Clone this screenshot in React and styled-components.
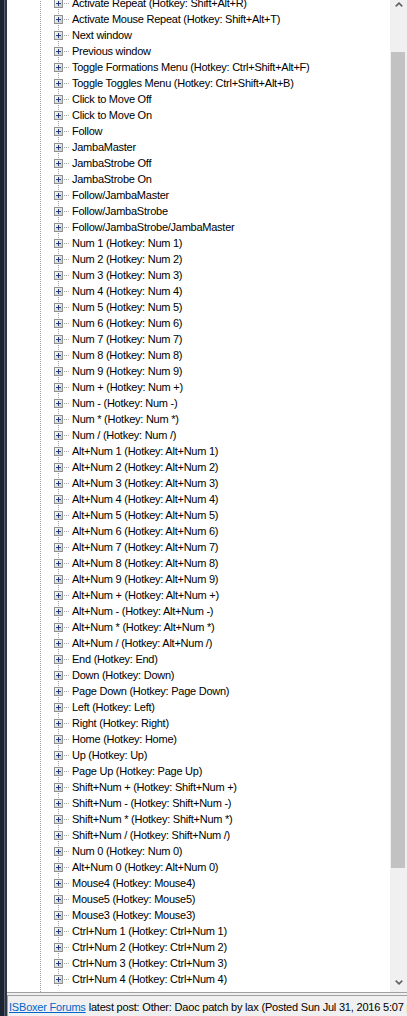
import React from 'react';
import styled, { createGlobalStyle } from 'styled-components';

const GlobalStyle = createGlobalStyle`
  html, body {
    margin: 0;
    padding: 0;
    background: #ffffff;
  }
  body {
    font-family: "Liberation Sans", Arial, sans-serif;
  }
`;

const nodes = [
  'Activate Repeat (Hotkey: Shift+Alt+R)',
  'Activate Mouse Repeat (Hotkey: Shift+Alt+T)',
  'Next window',
  'Previous window',
  'Toggle Formations Menu (Hotkey: Ctrl+Shift+Alt+F)',
  'Toggle Toggles Menu (Hotkey: Ctrl+Shift+Alt+B)',
  'Click to Move Off',
  'Click to Move On',
  'Follow',
  'JambaMaster',
  'JambaStrobe Off',
  'JambaStrobe On',
  'Follow/JambaMaster',
  'Follow/JambaStrobe',
  'Follow/JambaStrobe/JambaMaster',
  'Num 1 (Hotkey: Num 1)',
  'Num 2 (Hotkey: Num 2)',
  'Num 3 (Hotkey: Num 3)',
  'Num 4 (Hotkey: Num 4)',
  'Num 5 (Hotkey: Num 5)',
  'Num 6 (Hotkey: Num 6)',
  'Num 7 (Hotkey: Num 7)',
  'Num 8 (Hotkey: Num 8)',
  'Num 9 (Hotkey: Num 9)',
  'Num + (Hotkey: Num +)',
  'Num - (Hotkey: Num -)',
  'Num * (Hotkey: Num *)',
  'Num / (Hotkey: Num /)',
  'Alt+Num 1 (Hotkey: Alt+Num 1)',
  'Alt+Num 2 (Hotkey: Alt+Num 2)',
  'Alt+Num 3 (Hotkey: Alt+Num 3)',
  'Alt+Num 4 (Hotkey: Alt+Num 4)',
  'Alt+Num 5 (Hotkey: Alt+Num 5)',
  'Alt+Num 6 (Hotkey: Alt+Num 6)',
  'Alt+Num 7 (Hotkey: Alt+Num 7)',
  'Alt+Num 8 (Hotkey: Alt+Num 8)',
  'Alt+Num 9 (Hotkey: Alt+Num 9)',
  'Alt+Num + (Hotkey: Alt+Num +)',
  'Alt+Num - (Hotkey: Alt+Num -)',
  'Alt+Num * (Hotkey: Alt+Num *)',
  'Alt+Num / (Hotkey: Alt+Num /)',
  'End (Hotkey: End)',
  'Down (Hotkey: Down)',
  'Page Down (Hotkey: Page Down)',
  'Left (Hotkey: Left)',
  'Right (Hotkey: Right)',
  'Home (Hotkey: Home)',
  'Up (Hotkey: Up)',
  'Page Up (Hotkey: Page Up)',
  'Shift+Num + (Hotkey: Shift+Num +)',
  'Shift+Num - (Hotkey: Shift+Num -)',
  'Shift+Num * (Hotkey: Shift+Num *)',
  'Shift+Num / (Hotkey: Shift+Num /)',
  'Num 0 (Hotkey: Num 0)',
  'Alt+Num 0 (Hotkey: Alt+Num 0)',
  'Mouse4 (Hotkey: Mouse4)',
  'Mouse5 (Hotkey: Mouse5)',
  'Mouse3 (Hotkey: Mouse3)',
  'Ctrl+Num 1 (Hotkey: Ctrl+Num 1)',
  'Ctrl+Num 2 (Hotkey: Ctrl+Num 2)',
  'Ctrl+Num 3 (Hotkey: Ctrl+Num 3)',
  'Ctrl+Num 4 (Hotkey: Ctrl+Num 4)',
];

const dots = '#a0a0a0';

const Window = styled.div`
  display: flex;
  width: 407px;
  height: 1016px;
  overflow: hidden;
`;

const Frame = styled.div`
  flex: none;
  width: 7px;
  background: linear-gradient(to right, #1b2532 0 4px, #56606c 4px 5px, #2c3644 5px 7px);
`;

const Body = styled.div`
  flex: 1;
  min-width: 0;
  display: flex;
  flex-direction: column;
`;

const TreePane = styled.div`
  flex: none;
  height: 992px;
  display: flex;
  border-bottom: 1px solid #a0a0a0;
`;

const TreeView = styled.div`
  flex: 1;
  min-width: 0;
  overflow: hidden;
  background: #ffffff;
`;

const Branch = styled.ul`
  list-style: none;
  margin: -5px 0 0 0;
  padding: 0 0 8px 34px;
  background: repeating-linear-gradient(to bottom, ${dots} 0 1px, transparent 1px 2px) 33px 0 / 1px 100% no-repeat;
`;

const Node = styled.li`
  height: 16px;
  display: flex;
  align-items: center;
  padding-left: 13px;
  background: repeating-linear-gradient(to bottom, ${dots} 0 1px, transparent 1px 2px) 17px 0 / 1px 100% no-repeat;
`;

const Expander = styled.svg`
  flex: none;
  width: 9px;
  height: 9px;
  display: block;
  margin-top: 1px;
`;

const Dash = styled.span`
  flex: none;
  width: 5px;
  height: 1px;
  margin: 1px 0 0 1px;
  background: repeating-linear-gradient(to right, ${dots} 0 1px, transparent 1px 2px);
`;

const Label = styled.span`
  margin-left: 3px;
  font-size: 11px;
  letter-spacing: -0.25px;
  line-height: 16px;
  color: #000000;
  white-space: nowrap;
`;

const Scrollbar = styled.div`
  flex: none;
  width: 17px;
  display: flex;
  flex-direction: column;
  background: #f0f0f0;
`;

const ArrowButton = styled.div`
  flex: none;
  height: ${p => p.$h}px;
  display: flex;
  justify-content: center;
  align-items: ${p => (p.$up ? 'flex-start' : 'center')};
  padding-top: ${p => (p.$up ? 2 : 0)}px;
  box-sizing: border-box;
`;

const Track = styled.div`
  flex: 1;
  display: flex;
  flex-direction: column;
  padding: ${p => p.$before}px 2px 0 1px;
`;

const Thumb = styled.div`
  height: ${p => p.$h}px;
  background: #c2c2c2;
`;

const StatusBar = styled.div`
  flex: 1;
  display: flex;
  align-items: flex-start;
  background: #f0f0f0;
  padding-top: 2px;
`;

const StatusPanel = styled.div`
  flex: 1;
  height: 21px;
  display: flex;
  align-items: center;
  padding-left: 1px;
  border-top: 1px solid #a0a0a0;
  border-left: 1px solid #a0a0a0;
  font-size: 11px;
  letter-spacing: -0.2px;
  color: #000000;
  white-space: nowrap;
  overflow: hidden;
`;

const ForumLink = styled.a`
  color: #0066cc;
  text-decoration: underline;
  margin-right: 3px;
`;

function PlusBox() {
  return (
    <Expander viewBox="0 0 9 9">
      <defs>
        <linearGradient id="pb" x1="0" y1="0" x2="1" y2="1">
          <stop offset="0" stopColor="#ffffff" />
          <stop offset="1" stopColor="#c6c6c6" />
        </linearGradient>
      </defs>
      <rect x="0.5" y="0.5" width="8" height="8" fill="url(#pb)" stroke="#919191" />
      <path d="M2 4.5h5M4.5 2v5" stroke="#1f3b85" strokeWidth="1" />
    </Expander>
  );
}

function Chevron({ up }) {
  return (
    <svg width="8" height="5" viewBox="0 0 8 5">
      <path
        d={up ? 'M0.7 4.3 4 1.2 7.3 4.3' : 'M0.7 0.7 4 3.8 7.3 0.7'}
        fill="none"
        stroke="#606060"
        strokeWidth="1.6"
      />
    </svg>
  );
}

export default function App() {
  return (
    <>
      <GlobalStyle />
      <Window>
        <Frame />
        <Body>
          <TreePane>
            <TreeView>
              <Branch>
                {nodes.map(text => (
                  <Node key={text}>
                    <PlusBox />
                    <Dash />
                    <Label>{text}</Label>
                  </Node>
                ))}
              </Branch>
            </TreeView>
            <Scrollbar>
              <ArrowButton $h={12} $up>
                <Chevron up />
              </ArrowButton>
              <Track $before={40}>
                <Thumb $h={816} />
              </Track>
              <ArrowButton $h={20}>
                <Chevron />
              </ArrowButton>
            </Scrollbar>
          </TreePane>
          <StatusBar>
            <StatusPanel>
              <ForumLink href="#">ISBoxer Forums</ForumLink>
              latest post: Other: Daoc patch by lax (Posted Sun Jul 31, 2016 5:07 pm)
            </StatusPanel>
          </StatusBar>
        </Body>
      </Window>
    </>
  );
}
